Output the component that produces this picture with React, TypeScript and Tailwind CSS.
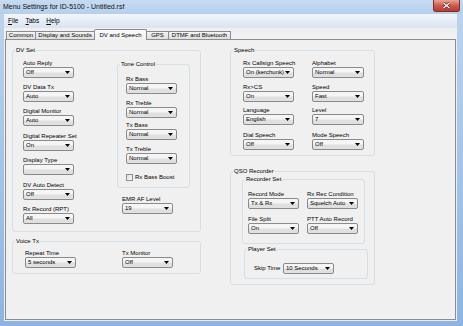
import React from 'react';

function Combo({ value, className = 'w-[51px]' }: { value: string; className?: string }) {
  return (
    <div className={`h-[11px] ${className} shrink-0 flex items-center rounded-[2px] border border-[#8a8a8a] bg-gradient-to-b from-[#f5f5f5] from-45% to-[#e0e0e0] to-55% pl-[2px] pr-[3px]`}>
      <span className="flex-1 overflow-hidden whitespace-nowrap leading-[9px]">{value}</span>
      <svg width="5" height="3" viewBox="0 0 5 3" className="shrink-0">
        <path d="M0 0H5L2.5 3Z" fill="#000" />
      </svg>
    </div>
  );
}

function Field({ label, value, className = '', combo = 'w-[51px]' }: { label: string; value: string; className?: string; combo?: string }) {
  return (
    <div className={`flex flex-col w-[51px] ${className}`}>
      <div className="h-[8px] leading-[8px] whitespace-nowrap">{label}</div>
      <Combo value={value} className={combo} />
    </div>
  );
}

// groupbox: padding goes on the inner div so the legend keeps its place on the border
function Group({ title, className = '', inner = '', children }: { title: string; className?: string; inner?: string; children?: React.ReactNode }) {
  return (
    <fieldset className={`shrink-0 rounded-[3px] border border-[#d5dfe5] ${className}`}>
      <legend className="ml-[2px] px-[1px] h-[8px] leading-[8px]">{title}</legend>
      <div className={inner}>{children}</div>
    </fieldset>
  );
}

function CloseButton() {
  return (
    <div className="ml-auto mr-[3px] w-[27px] h-[12px] rounded-b-[3px] border border-t-0 border-[#7a3030] bg-gradient-to-b from-[#e8a497] via-[#cf5a4e] to-[#b8392f] flex items-center justify-center">
      <svg width="9" height="7" viewBox="0 0 9 7">
        <path d="M1.5 1L7.5 6M7.5 1L1.5 6" stroke="#5a1a1a" strokeWidth="2.6" />
        <path d="M1.5 1L7.5 6M7.5 1L1.5 6" stroke="#fff" strokeWidth="1.3" />
      </svg>
    </div>
  );
}

const TABS = [
  { label: 'Common', w: 'w-[30px] border-l' },
  { label: 'Display and Sounds', w: 'w-[59px]' },
  { label: 'DV and Speech', w: 'w-[53px]', active: true },
  { label: 'GPS', w: 'w-[22px]' },
  { label: 'DTMF and Bluetooth', w: 'w-[62px]' },
];

export default function App() {
  return (
    <div className="w-[463px] h-[326px] flex flex-col bg-gradient-to-b from-[#bdd4ee] to-[#8db4e3] font-['Liberation_Sans',Arial,sans-serif] text-[6px] text-black overflow-hidden">
      {/* title bar */}
      <div className="h-[14px] shrink-0 flex items-start bg-gradient-to-b from-[#c6dbf2] to-[#b5cfec]">
        <span className="ml-[3px] mt-[3px] text-[7px] leading-[8px] text-[#111]">Menu Settings for ID-5100 - Untitled.rsf</span>
        <CloseButton />
      </div>

      <div className="flex-1 flex flex-col ml-[4px] mr-[6px] mb-[5px] bg-[#f0f0f0]">
        {/* menu */}
        <div className="h-[14px] shrink-0 flex items-center gap-[7px] pl-[4px] text-[6.5px] bg-gradient-to-b from-[#f3f6fb] to-[#dbe3f1]">
          <span><span className="underline">F</span>ile</span>
          <span><span className="underline">T</span>abs</span>
          <span><span className="underline">H</span>elp</span>
        </div>

        {/* tabs */}
        <div className="h-[11px] shrink-0 flex items-end pl-[2px] relative z-10">
          {TABS.map(t => (
            <div
              key={t.label}
              className={
                t.active
                  ? `${t.w} -ml-[1px] h-[11px] -mb-[1px] border-x border-t border-[#898c95] rounded-t-[2px] bg-gradient-to-b from-[#fbfbfb] to-[#f0f0f0] flex items-center justify-center whitespace-nowrap`
                  : `${t.w} h-[8px] border-r border-t border-[#898c95] bg-gradient-to-b from-[#f4f4f4] to-[#dedede] flex items-center justify-center whitespace-nowrap`
              }
            >
              {t.label}
            </div>
          ))}
        </div>

        {/* tab page */}
        <div className="flex-1 mx-[1px] mb-[1px] border border-[#898c95] bg-[#f0f0f0] flex gap-[29px] pl-[6px] pt-[6px]">
          {/* left column */}
          <div className="flex flex-col w-[189px]">
            <Group title="DV Set" className="h-[186px]" inner="flex pt-[5px] pl-[10px]">
              <div className="flex flex-col w-[51px]">
                <Field label="Auto Reply" value="Off" />
                <Field label="DV Data Tx" value="Auto" className="mt-[5px]" />
                <Field label="Digital Monitor" value="Auto" className="mt-[5px]" />
                <Field label="Digital Repeater Set" value="On" className="mt-[6px]" />
                <Field label="Display Type" value="" className="mt-[5px]" />
                <Field label="DV Auto Detect" value="Off" className="mt-[6px]" />
                <Field label="Rx Record (RPT)" value="All" className="mt-[5px]" />
              </div>
              <div className="ml-[43px] flex flex-col">
                <Group title="Tone Control" className="mt-[1px] w-[73px] h-[128px]" inner="pt-[7px] pl-[8px]">
                  <Field label="Rx Bass" value="Normal" />
                  <Field label="Rx Treble" value="Normal" className="mt-[5px]" />
                  <Field label="Tx Bass" value="Normal" className="mt-[3px]" />
                  <Field label="Tx Treble" value="Normal" className="mt-[5px]" />
                  <div className="mt-[9px] flex items-center gap-[2px] h-[8px]">
                    <span className="w-[7px] h-[7px] border border-[#8e8f8f] bg-gradient-to-br from-[#dcdcdc] to-[#fbfbfb]" />
                    <span className="leading-[8px]">Rx Bass Boost</span>
                  </div>
                </Group>
                <Field label="EMR AF Level" value="19" className="mt-[7px] ml-[5px]" />
              </div>
            </Group>

            <Group title="Voice Tx" className="mt-[5px] h-[37px]" inner="flex pt-[4px] pl-[12px]">
              <Field label="Repeat Time" value="5 seconds" />
              <Field label="Tx Monitor" value="Off" className="ml-[46px]" />
            </Group>
          </div>

          {/* right column */}
          <div className="flex flex-col w-[145px]">
            <Group title="Speech" className="h-[110px]" inner="pt-[5px] pl-[12px]">
              <div className="flex gap-[18px]">
                <Field label="Rx Callsign Speech" value="On (kerchunk)" />
                <Field label="Alphabet" value="Normal" combo="w-[52px]" />
              </div>
              <div className="flex gap-[18px] mt-[5px]">
                <Field label="Rx>CS" value="On" />
                <Field label="Speed" value="Fast" combo="w-[52px]" />
              </div>
              <div className="flex gap-[18px] mt-[4px]">
                <Field label="Language" value="English" />
                <Field label="Level" value="7" combo="w-[52px]" />
              </div>
              <div className="flex gap-[18px] mt-[6px]">
                <Field label="Dial Speech" value="Off" />
                <Field label="Mode Speech" value="Off" combo="w-[52px]" />
              </div>
            </Group>

            <Group title="QSO Recorder" className="mt-[11px] h-[118px]">
              <Group title="Recorder Set" className="ml-[11px] w-[123px] h-[69px]" inner="pt-[7px] pl-[5px]">
                <div className="flex gap-[8px]">
                  <Field label="Record Mode" value="Tx & Rx" />
                  <Field label="Rx Rec Condition" value="Squelch Auto" />
                </div>
                <div className="flex gap-[8px] mt-[6px]">
                  <Field label="File Split" value="On" />
                  <Field label="PTT Auto Record" value="Off" />
                </div>
              </Group>
              <Group title="Player Set" className="mt-[1px] ml-[13px] w-[124px] h-[34px]" inner="flex items-center pt-[10px] pl-[9px]">
                <span className="w-[29px] whitespace-nowrap">Skip Time</span>
                <Combo value="10 Seconds" />
              </Group>
            </Group>
          </div>
        </div>
      </div>
    </div>
  );
}
